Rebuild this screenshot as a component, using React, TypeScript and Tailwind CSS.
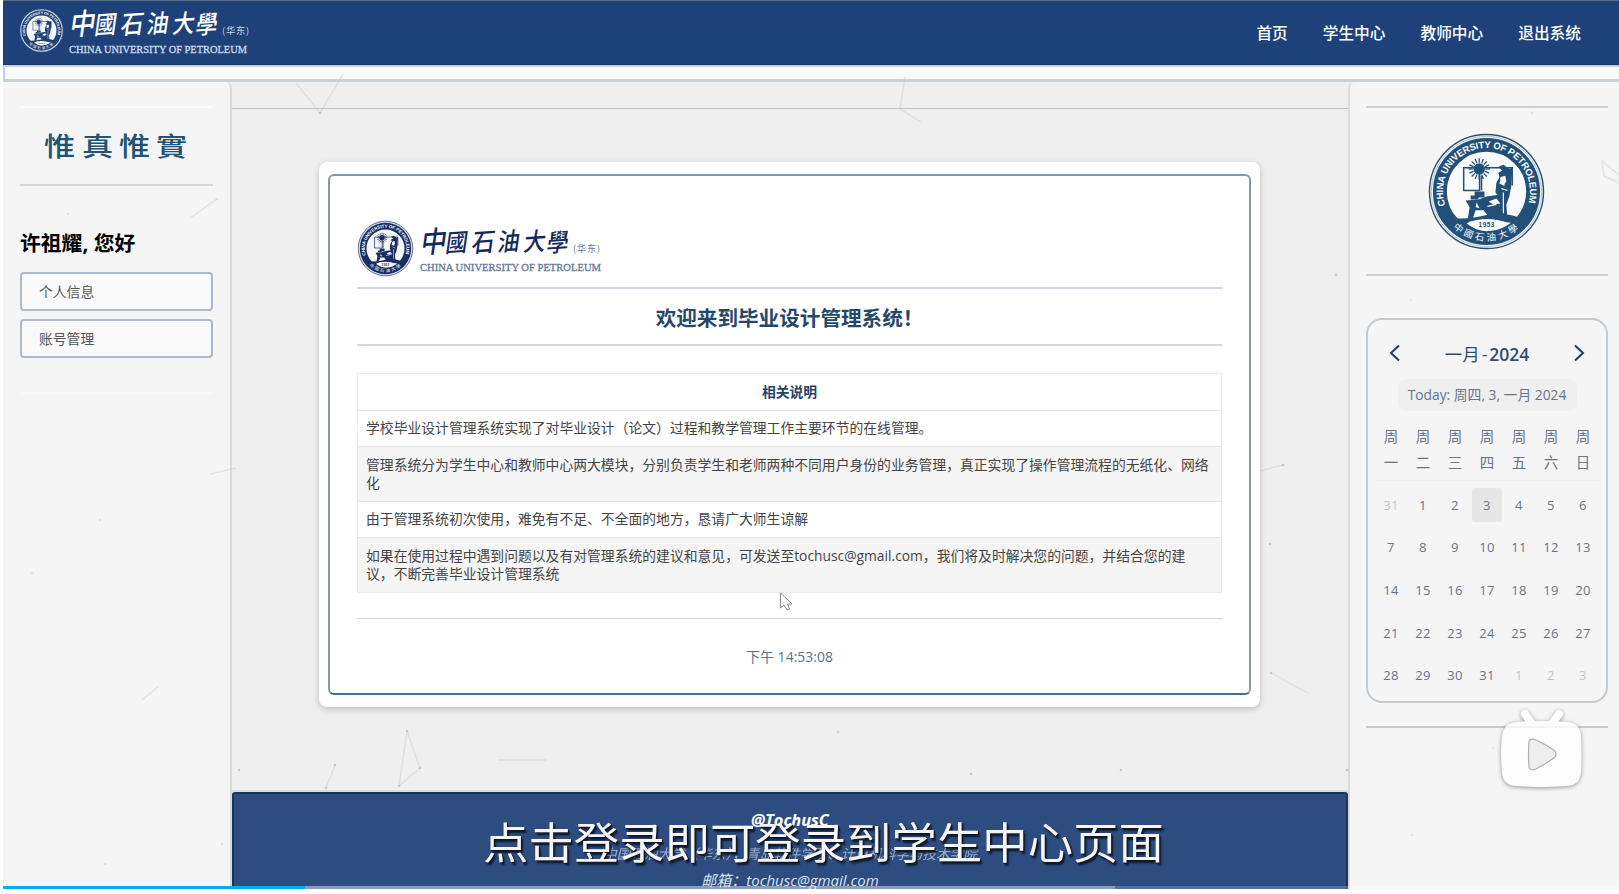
import React from "react";

const SUN_RAYS = Array.from({ length: 16 }, (_, i) => (i * 360) / 16);

function Seal({ id, size, color, paper }: { id: string; size: number; color: string; paper: string }) {
  return (
    <svg width={size} height={size} viewBox="0 0 120 120" className="shrink-0">
      <defs>
        <path id={id + "-top"} d="M18.5 74 A43.8 43.8 0 1 1 101.5 74" />
        <path id={id + "-bottom"} d="M17 86 A51 51 0 0 0 103 86" />
      </defs>
      <circle cx="60" cy="60" r="57.5" fill={paper} stroke={color} strokeWidth="1.4" />
      <circle cx="60" cy="60" r="47" fill="none" stroke={color} strokeWidth="14" />
      <circle cx="60" cy="60" r="55.7" fill="none" stroke={color} strokeWidth="1" opacity="0.35" />
      <text fill={paper} fontFamily="Liberation Sans, sans-serif" fontWeight="700" fontSize="9.6">
        <textPath href={"#" + id + "-top"} textLength="163" lengthAdjust="spacing">
          CHINA UNIVERSITY OF PETROLEUM
        </textPath>
      </text>
      <g stroke={color} fill="none" strokeWidth="1.5">
        <path d="M37 36H53V59H37Z M53 36H86V54 M55 44V59" />
        {SUN_RAYS.map((a) => (
          <path key={a} d="M52.7 31V26.5" strokeWidth="1.3" transform={"rotate(" + a + " 52.7 37.3)"} />
        ))}
      </g>
      <g fill={color}>
        <circle cx="52.7" cy="37.3" r="5.8" />
        <path d="M48 60H58V66H48Z M44 64H52V68H44Z" />
        <path d="M39 69L52 68L60 65L74 63L79 69L78 85L61 84L57 79L49 79L46 88L41 88L43 76Z" />
        <path d="M72 35L77 33L83 37L86 36L85 55L83 65L80 73L81 86L75 86V68L69 61L70 51L73 46L72 41L76 39Z" />
        <path d="M28 87Q45 88 61 83.5Q74 80 92 86L95 92Q78 91 60 90Q50 88 42 91Q49 99 60 101Q75 101 84 95L76 108H45Z" />
      </g>
      <path d="M75 45L79 44L80 50L77 54L73 52Z M62 70L70 67L74 72L67 73Z M50 71L53 77L49 76Z" fill={paper} />
      <path d="M74 46L78 54 M75 57L81 59 M77 61V82 M61 75L70 73" stroke={paper} strokeWidth="1.2" />
      <path d="M40 92Q60 83.5 82 92Q73 100 60 99.5Q47 99 40 92Z" fill={paper} />
      <text x="60" y="96" fontSize="6.5" fontWeight="700" fontFamily="Liberation Sans, sans-serif" fill={color} textAnchor="middle" textLength="16">
        1953
      </text>
      <text fill={paper} fontSize="9.5" fontFamily="Noto Sans CJK TC, sans-serif">
        <textPath href={"#" + id + "-bottom"} startOffset="14" textLength="72">
          中國石油大學
        </textPath>
      </text>
    </svg>
  );
}

const BRUSH: [string, number, number, number][] = [
  ["中", 0, 25, 26],
  ["國", 25, 24, 22],
  ["石", 51, 24, 23],
  ["油", 77, 23, 22],
  ["大", 103, 23, 22],
  ["學", 126, 24, 22],
];

function Wordmark({ color, soft, width }: { color: string; soft: string; width: number }) {
  return (
    <svg width={width} height="48" viewBox={"0 0 " + width + " 48"} className="shrink-0 overflow-visible">
      <g fill={color} fontFamily="Noto Sans CJK TC, sans-serif" fontWeight="500">
        {BRUSH.map(([c, x, y, s]) => (
          <text key={c} transform={"translate(" + x + " " + y + ") rotate(-4) skewX(-12) scale(1 1.12)"} fontSize={s} y="2">
            {c}
          </text>
        ))}
      </g>
      <text x="153" y="26" fontSize="9.2" fill={soft} fontFamily="Noto Sans CJK SC, sans-serif" textLength="27">
        (华东)
      </text>
      <text x="0" y="44.5" fontSize="10.5" fill={soft} stroke={soft} strokeWidth="0.3" fontFamily="Liberation Serif, serif" textLength={width} lengthAdjust="spacingAndGlyphs">
        CHINA UNIVERSITY OF PETROLEUM
      </text>
    </svg>
  );
}

function Particles() {
  const lines = [
    "M296 83L320 113", "M320 113L343 74", "M190 218L217 199", "M905 77L900 109L921 122",
    "M1260 471L1283 465", "M1271 673L1308 693", "M335 765L326 788", "M407 731L420 768L399 786",
    "M407 731L399 786", "M498 760H546", "M210 474L236 468", "M142 700L159 686",
    "M1619 175L1602 161L1604 176L1619 183",
  ];
  const dots = [
    [320, 113], [217, 199], [1283, 465], [1271, 673], [335, 765], [326, 788], [407, 731], [420, 768],
    [399, 786], [239, 770], [1270, 544], [1336, 275], [68, 214], [1532, 113], [1411, 300], [838, 732],
    [1347, 770], [1493, 748], [105, 864], [222, 844], [971, 774], [1412, 835], [32, 573], [100, 520], [1121, 770],
  ];
  return (
    <svg className="pointer-events-none absolute inset-0" width="1619" height="886">
      <g stroke="#bbb" strokeWidth="1.4" fill="none" opacity="0.32">
        {lines.map((d) => <path key={d} d={d} />)}
      </g>
      {dots.map(([x, y]) => (
        <circle key={x + "-" + y} cx={x} cy={y} r="1.3" fill="#aaa" opacity={x < 230 || x > 1349 ? 0.25 : 0.55} />
      ))}
    </svg>
  );
}

const NOTES = [
  "学校毕业设计管理系统实现了对毕业设计（论文）过程和教学管理工作主要环节的在线管理。",
  "管理系统分为学生中心和教师中心两大模块，分别负责学生和老师两种不同用户身份的业务管理，真正实现了操作管理流程的无纸化、网络化",
  "由于管理系统初次使用，难免有不足、不全面的地方，恳请广大师生谅解",
  "如果在使用过程中遇到问题以及有对管理系统的建议和意见，可发送至tochusc@gmail.com，我们将及时解决您的问题，并结合您的建议，不断完善毕业设计管理系统",
];
const ROW_STYLE = [
  "h-[36px] bg-white pr-2",
  "h-[55px] bg-[#f5f5f5] pr-2",
  "h-[36px] bg-white pr-2",
  "h-[55px] bg-[#f5f5f5] pr-[24px]",
];
const WEEK = ["一", "二", "三", "四", "五", "六", "日"];
const DAYS = [31, ...Array.from({ length: 31 }, (_, i) => i + 1), 1, 2, 3];

function Calendar() {
  return (
    <div className="mt-[42px] flex h-[385px] flex-col rounded-[16px] border-2 border-[#c1c9d1] px-[7px] text-[#66758a]">
      <div className="mt-[19px] flex h-7 items-center justify-between pr-[14px] pl-[14px] text-[#243d5f]">
        <svg width="11" height="18" viewBox="0 0 11 18" fill="none" stroke="currentColor" strokeWidth="2"><path d="M10 1.5L2 9L10 16.5" /></svg>
        <div className="pt-px text-[17.5px] leading-7 font-semibold text-[#344b69]"><span className="font-normal">一月</span><span className="mx-[2px] font-normal">-</span>2024</div>
        <svg width="11" height="18" viewBox="0 0 11 18" fill="none" stroke="currentColor" strokeWidth="2"><path d="M1 1.5L9 9L1 16.5" /></svg>
      </div>
      <div className="mt-[12px] flex h-8 w-[179px] shrink-0 items-center justify-center self-center rounded-lg bg-[#efefef] text-[13.8px] leading-[26px] whitespace-nowrap">
        Today: 周四, 3, 一月 2024
      </div>
      <div className="mt-[13px] grid grid-cols-7 border-b border-[#efefef] pb-[4px] text-center text-[14.5px] leading-[26px]">
        {WEEK.map((d) => <div key={d}>周<br />{d}</div>)}
      </div>
      <div className="mt-[3px] grid grid-cols-7 text-center text-[13px] tracking-[0.4px]">
        {DAYS.map((d, i) => (
          <div key={i} className="flex h-[42.7px] items-center justify-center">
            <span className={
              i === 3
                ? "flex h-[34px] w-[30px] items-center justify-center rounded-[3px] bg-[#e6e6e6]"
                : i === 0 || i > 31 ? "text-[#c3c5c8]" : ""
            }>{d}</span>
          </div>
        ))}
      </div>
    </div>
  );
}

export default function App() {
  return (
    <div className="relative h-[894px] w-[1619px] overflow-hidden bg-white pl-[3px] font-['Open_Sans','Noto_Sans_CJK_SC',sans-serif]">
      <div className="flex h-[889px] flex-col overflow-hidden bg-[#efefef]">
        <header className="flex h-[65px] shrink-0 items-start border-t border-b border-t-[#5d7082] border-b-[#17366a] bg-[#1e4179] text-white">
          <div className="flex pt-[7px] pl-[16px]">
            <Seal id="top" size={45} color="#1e4179" paper="#f4f7fb" />
            <div className="ml-[5px]"><Wordmark color="#fff" soft="#cfd9ea" width={178} /></div>
          </div>
          <nav className="ml-auto flex gap-[35px] pt-[19px] pr-[38px] text-[15.7px] leading-[26px] font-medium">
            <span>首页</span><span>学生中心</span><span>教师中心</span><span>退出系统</span>
          </nav>
        </header>
        <div className="h-[17px] shrink-0 border-t-2 border-b-[3px] border-l-2 border-t-[#c6cede] border-b-[#cbd0d5] border-l-[#c6cede] bg-[#f8f8f8]" />
        <div className="flex min-h-0 flex-1">
          <aside className="w-[229px] shrink-0 rounded-tr-md border-r-2 border-[#dadada] bg-[#f5f5f5] pr-[17px] pl-[17px]">
            <div className="mt-6 h-0.5 bg-[#fafafa]" />
            <div className="h-[76px] pt-[19px] pl-[24px]">
              <svg width="150" height="40" className="overflow-visible">
                <g fill="#205475" fontFamily="Noto Sans CJK TC, sans-serif" fontWeight="500" fontSize="26">
                  <text transform="translate(0 29) scale(1.2 1)">惟</text>
                  <text transform="translate(38 29) scale(1.2 1)">真</text>
                  <text transform="translate(75 29) scale(1.2 1)">惟</text>
                  <text transform="translate(112 29) scale(1.2 1)">實</text>
                </g>
              </svg>
            </div>
            <div className="h-0.5 bg-[#d3d7da]" />
            <h1 className="mt-[42px] h-[29px] text-[20.8px] leading-[30px] font-bold whitespace-nowrap text-black">许祖耀, 您好</h1>
            <div className="mt-[15px] flex h-[39px] items-center rounded-[4px] border-2 border-[#aebaca] bg-[#fafafa] pt-[2px] pl-[17px] text-[13.8px] text-[#555]">个人信息</div>
            <div className="mt-2 flex h-[39px] items-center rounded-[4px] border-2 border-[#aebaca] bg-[#fafafa] pt-[2px] pl-[17px] text-[13.8px] text-[#555]">账号管理</div>
            <div className="mt-[34px] h-0.5 bg-[#f8f8f8]" />
          </aside>
          <main className="flex min-w-0 flex-1 flex-col">
            <div className="h-[27px] shrink-0 border-b border-[#b9c2cb]" />
            <section className="mr-[88px] ml-[87px] mt-[53px] h-[545px] shrink-0 rounded-[8px] bg-white px-[9px] pt-3 shadow-[0_2px_6px_rgba(0,0,0,0.22)]">
              <div className="flex h-[521px] flex-col rounded-[6px] border-2 border-[#8797a7] border-b-[#42708d] px-[27px] text-[#333]">
                <div className="mt-[44px] flex h-[69px] shrink-0 border-b-2 border-[#d0d7de]">
                  <Seal id="card" size={57} color="#1b2d63" paper="#f4f6fa" />
                  <div className="mt-[6px] ml-[6px]"><Wordmark color="#16295c" soft="#68769a" width={181} /></div>
                </div>
                <h2 className="flex h-[57px] shrink-0 items-center justify-center border-b-2 border-[#d3d9de] pt-[3px] text-[20.6px] font-bold text-[#254869]">欢迎来到毕业设计管理系统！</h2>
                <div className="mt-[27px] shrink-0 border border-[#ebebeb]">
                  <div className="flex h-[36px] items-center justify-center text-[13.8px] leading-[34px] font-bold text-[#274466]">相关说明</div>
                  {NOTES.map((n, i) => (
                    <div key={i} className={"flex items-center border-t border-[#e6e6e6] pl-2 text-[13.82px] leading-[18.5px] text-[#444] " + ROW_STYLE[i]}>
                      <p>{n}</p>
                    </div>
                  ))}
                </div>
                <div className="mt-[25px] h-px shrink-0 bg-[#cbd5dd]" />
                <div className="mt-[26px] text-center text-[14px] leading-[24px] text-[#5f7187]">下午 14:53:08</div>
              </div>
            </section>
            <footer className="mt-auto flex h-[99px] shrink-0 flex-col items-center overflow-hidden border-t-2 border-[#d6dfe6] text-white italic">
              <div className="flex w-full flex-1 flex-col items-center rounded-t-[3px] border-t-2 border-r-2 border-l-2 border-[#1a365f] bg-[#2d4c80]">
                <div className="mt-[13px] text-[16.4px] leading-[26px] font-bold">@TochusC</div>
                <div className="mt-[8px] text-[13.6px] leading-[26px] whitespace-nowrap opacity-55">中国石油大学（华东），青岛软件学院、计算机科学与技术学院</div>
                <div className="text-[15px] leading-[26px] whitespace-nowrap text-[#dbe4f2]">邮箱：tochusc@gmail.com</div>
              </div>
            </footer>
          </main>
          <aside className="w-[271px] shrink-0 rounded-tl-md border-l-2 border-[#dadada] bg-[#f5f5f5] pr-[11px] pl-[16px]">
            <div className="mt-6 h-0.5 bg-[#cbd0d6]" />
            <div className="flex h-[166px] items-center justify-center pr-[2px]"><Seal id="side" size={119} color="#235078" paper="#f8fafc" /></div>
            <div className="h-0.5 bg-[#cbd0d6]" />
            <Calendar />
            <div className="mt-[23px] h-0.5 bg-[#c3cad1]" />
          </aside>
        </div>
      </div>

      <Particles />

      <svg className="absolute top-[700px] left-[1490px]" width="104" height="104" viewBox="0 0 104 104">
        <g filter="drop-shadow(0 1px 2px rgba(0,0,0,.4))">
          <path d="M35 14L43 25M69 14L61 25" stroke="#fff" strokeWidth="8" strokeLinecap="round" />
          <path d="M27 22Q51 20 77 22Q91 23 91 37Q92 56 91 72Q90 86 76 86Q51 88 27 86Q13 86 12 72Q10 52 12 37Q13 23 27 22Z" fill="#fdfdfd" />
        </g>
        <path d="M16 27H88" stroke="#f4f4f4" strokeWidth="2" />
        <path d="M39 41Q41 38 46 40Q57 45 65 51Q67 54 65 57Q56 64 46 69Q41 71 39 68Q38 54 39 41Z" fill="#eee" stroke="#b0b0b0" strokeWidth="1.2" />
      </svg>

      <svg className="absolute top-[592px] left-[779px]" width="16" height="22" viewBox="0 0 16 22">
        <path d="M1.5 1V16L5 13L8 18L10.5 17L8.5 12H13Z" fill="#fff" stroke="#888" strokeWidth="1" />
      </svg>

      <div className="absolute top-[810px] left-[483px] origin-center scale-y-[0.95] font-['Noto_Sans_CJK_SC',sans-serif] text-[45.4px] leading-[60px] whitespace-nowrap text-[#f5f5f5] [text-shadow:2px_3px_2px_#101a2b,1px_1px_1px_#000]">
        点击登录即可登录到学生中心页面
      </div>

      <div className="absolute top-[886px] left-[3px] flex h-[3px] w-[1616px]">
        <div className="w-[302px] bg-[#00aeec]" />
        <div className="w-[810px] bg-white/45" />
        <div className="flex-1 bg-white/20" />
      </div>
    </div>
  );
}
